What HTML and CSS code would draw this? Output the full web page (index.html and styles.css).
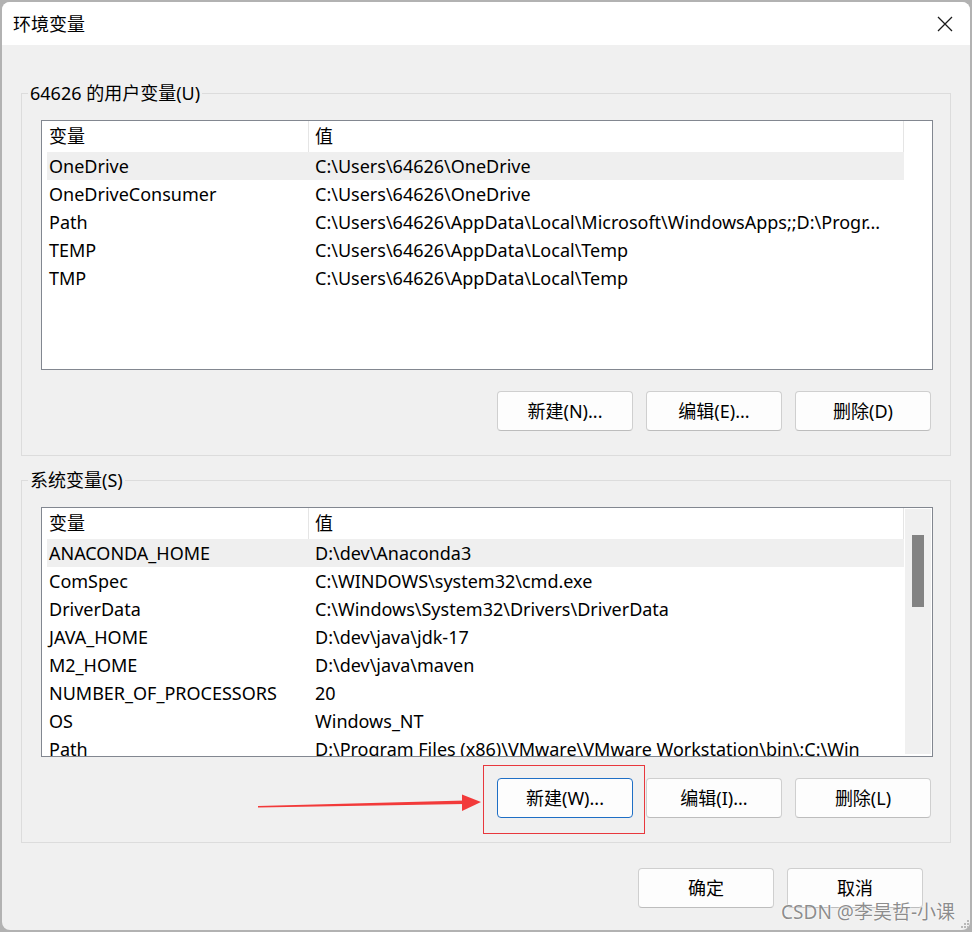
FILE: index.html
```html
<!DOCTYPE html>
<html lang="zh-CN">
<head>
<meta charset="utf-8">
<title>环境变量</title>
<link rel="stylesheet" href="styles.css">
</head>
<body>
<div class="window">
  <div class="titlebar">
    <span class="title">环境变量</span>
    <svg class="close" viewBox="0 0 16 16"><path d="M1 1 L15 15 M15 1 L1 15" stroke="#1b1b1b" stroke-width="1.3" fill="none"/></svg>
  </div>
  <div class="content">
    <fieldset class="group">
      <legend>64626 的用户变量(U)</legend>
      <div class="group-body">
        <div class="list">
          <div class="list-main">
            <div class="header"><div class="h1">变量</div><div class="h2">值</div></div>
            <div class="row sel"><div class="c1">OneDrive</div><div class="c2">C:\Users\64626\OneDrive</div></div>
            <div class="row"><div class="c1">OneDriveConsumer</div><div class="c2">C:\Users\64626\OneDrive</div></div>
            <div class="row"><div class="c1">Path</div><div class="c2">C:\Users\64626\AppData\Local\Microsoft\WindowsApps;;D:\Progr...</div></div>
            <div class="row"><div class="c1">TEMP</div><div class="c2">C:\Users\64626\AppData\Local\Temp</div></div>
            <div class="row"><div class="c1">TMP</div><div class="c2">C:\Users\64626\AppData\Local\Temp</div></div>
          </div>
        </div>
        <div class="buttons">
          <button class="btn">新建(N)...</button>
          <button class="btn">编辑(E)...</button>
          <button class="btn">删除(D)</button>
        </div>
      </div>
    </fieldset>
    <fieldset class="group group2">
      <legend>系统变量(S)</legend>
      <div class="group-body">
        <div class="list">
          <div class="list-main">
            <div class="header"><div class="h1">变量</div><div class="h2">值</div></div>
            <div class="row sel"><div class="c1">ANACONDA_HOME</div><div class="c2">D:\dev\Anaconda3</div></div>
            <div class="row"><div class="c1">ComSpec</div><div class="c2">C:\WINDOWS\system32\cmd.exe</div></div>
            <div class="row"><div class="c1">DriverData</div><div class="c2">C:\Windows\System32\Drivers\DriverData</div></div>
            <div class="row"><div class="c1">JAVA_HOME</div><div class="c2">D:\dev\java\jdk-17</div></div>
            <div class="row"><div class="c1">M2_HOME</div><div class="c2">D:\dev\java\maven</div></div>
            <div class="row"><div class="c1">NUMBER_OF_PROCESSORS</div><div class="c2">20</div></div>
            <div class="row"><div class="c1">OS</div><div class="c2">Windows_NT</div></div>
            <div class="row"><div class="c1">Path</div><div class="c2">D:\Program Files (x86)\VMware\VMware Workstation\bin\;C:\Win</div></div>
          </div>
          <div class="scrollbar"><div class="thumb"></div></div>
        </div>
        <div class="buttons">
          <button class="btn focused">新建(W)...</button>
          <button class="btn">编辑(I)...</button>
          <button class="btn">删除(L)</button>
        </div>
      </div>
    </fieldset>
    <div class="dialog-buttons">
      <button class="btn">确定</button>
      <button class="btn">取消</button>
    </div>
  </div>
  <svg class="annot" viewBox="2 2 968 928">
    <rect x="483.5" y="765.5" width="161" height="68" fill="none" stroke="#e8383d" stroke-width="1"/>
    <polygon points="258,806 465,800.5 465,804 258,807.6" fill="#f23a3a"/>
    <polygon points="462,794.5 481,802 462,811" fill="#f23a3a"/>
  </svg>
  <div class="watermark">CSDN @李昊哲-小课</div>
  <svg class="grip" viewBox="0 0 10 12">
    <rect x="7" y="2" width="2" height="2" fill="#b8b8b8"/>
    <rect x="4" y="5" width="2" height="2" fill="#b8b8b8"/>
    <rect x="7" y="5" width="2" height="2" fill="#b8b8b8"/>
    <rect x="1" y="8" width="2" height="2" fill="#b8b8b8"/>
    <rect x="4" y="8" width="2" height="2" fill="#b8b8b8"/>
    <rect x="7" y="8" width="2" height="2" fill="#b8b8b8"/>
  </svg>
</div>
</body>
</html>
```
FILE: styles.css
```css
* { box-sizing: border-box; }
html, body { margin: 0; padding: 0; }
body {
  width: 972px;
  height: 932px;
  overflow: hidden;
  background: #b2b2b2;
  font-family: "Noto Sans", "Noto Sans CJK SC", sans-serif;
  font-size: 18px;
  color: #000;
}
.window {
  position: relative;
  margin: 2px;
  width: 968px;
  height: 928px;
  border-radius: 8px;
  background: #f0f0f0;
  overflow: hidden;
  display: flex;
  flex-direction: column;
}
.titlebar {
  flex: none;
  height: 43px;
  background: #fff;
  display: flex;
  align-items: center;
  justify-content: space-between;
  padding: 0 17px 0 11px;
}
.title { line-height: 24px; }
.close { width: 16px; height: 16px; display: block; }
.content {
  padding: 36px 19px 0 19px;
  display: flex;
  flex-direction: column;
}
fieldset.group {
  margin: 0;
  padding: 0;
  min-width: 0;
  border: 1px solid #dcdcdc;
}
fieldset.group.group2 { margin-top: 12px; }
legend {
  margin-left: 6px;
  padding: 0 2px;
  line-height: 24px;
  height: 24px;
}
.group-body { padding: 15px 17px 24px 19px; }
.list {
  height: 250px;
  border: 1px solid #828790;
  background: #fff;
  display: flex;
  overflow: hidden;
}
.list-main { flex: 1; min-width: 0; overflow: hidden; }
.header { display: flex; height: 31px; line-height: 31px; }
.h1 { width: 267px; padding-left: 7px; border-right: 1px solid #e5e5e5; }
.h2 { width: 595px; padding-left: 6px; border-right: 1px solid #e5e5e5; }
.row {
  display: flex;
  height: 28px;
  line-height: 28px;
  margin-left: 5px;
  width: 857px;
  white-space: nowrap;
}
.row.sel { background: #efefef; }
.c1 { width: 261px; padding-left: 2px; overflow: hidden; }
.c2 { width: 596px; padding: 0 7px; overflow: hidden; }
.scrollbar {
  flex: none;
  width: 26px;
  margin: 1px 1px 2px 0;
  background: #f0f0f0;
  padding: 26px 0 0 7px;
}
.thumb { width: 12px; height: 72px; background: #838383; }
.buttons {
  margin-top: 21px;
  display: flex;
  justify-content: flex-end;
  gap: 13px;
  padding-right: 2px;
}
.btn {
  width: 136px;
  height: 40px;
  border: 1px solid #cfcfcf;
  border-bottom-color: #bdbdbd;
  border-radius: 4px;
  background: #fdfdfd;
  font-family: inherit;
  font-size: 18px;
  color: #000;
  padding: 0;
  line-height: 24px;
}
.btn.focused { border-color: #1f6fc5; }
.dialog-buttons {
  margin-top: 25px;
  display: flex;
  justify-content: flex-end;
  gap: 13px;
  padding-right: 28px;
}
.annot {
  position: absolute;
  left: 0;
  top: 0;
  width: 968px;
  height: 928px;
  pointer-events: none;
}
.watermark {
  position: absolute;
  right: 15px;
  bottom: 7px;
  font-size: 19px;
  line-height: 22px;
  color: rgba(120, 120, 120, 0.85);
  text-shadow: 0 0 2px #fff, 0 0 1px #fff;
  pointer-events: none;
}
.grip {
  position: absolute;
  right: 0;
  bottom: 0;
  width: 10px;
  height: 12px;
}
```
